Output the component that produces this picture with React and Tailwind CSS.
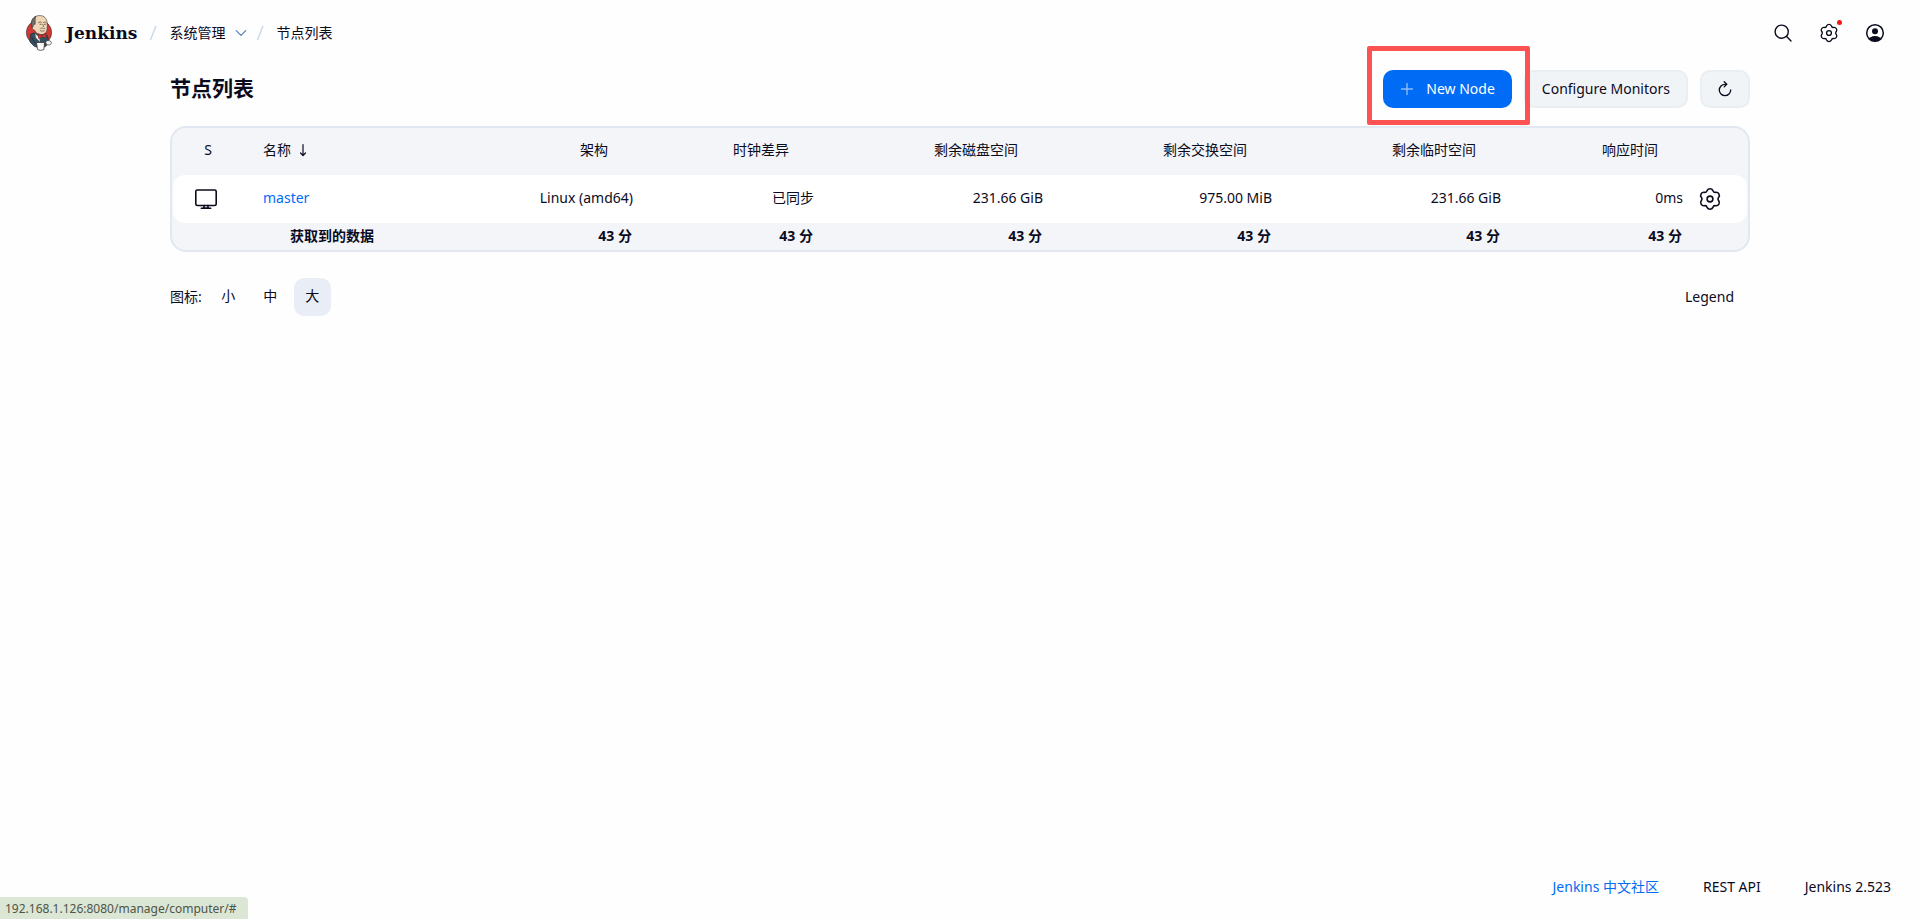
const MONITORS = [
  { name: '架构', value: 'Linux (amd64)' },
  { name: '时钟差异', value: '已同步' },
  { name: '剩余磁盘空间', value: '231.66 GiB' },
  { name: '剩余交换空间', value: '975.00 MiB' },
  { name: '剩余临时空间', value: '231.66 GiB' },
  { name: '响应时间', value: '0ms' }
]

const ICON_SIZES = ['小', '中', '大']

function JenkinsLogo() {
  return (
    <svg viewBox="0 0 26 36" className="w-[26px] h-9" aria-hidden="true">
      <ellipse cx="13" cy="17.500" rx="12.600" ry="12.500" fill="#d33833" stroke="#3b3434" strokeWidth="0.7" />
      <path d="M4.500 19.500c2-1.600 4.500-1.800 6.500-1l4 2 4.500-1.500c2 1 2.600 3 2.600 6l-1.600 5.500c-4 2-8 2.400-12 1L4 27z" fill="#335061" stroke="#1d2b35" strokeWidth="0.7" />
      <path d="M5.800 12C4.600 6 6.800 1.200 12.500.6c6-.5 8.700 3 8.700 8.400 0 3.500.3 6-1.200 8.300-1.300 1.800-3.300 2.400-5.300 2.200-3.300-.3-5-1.500-6-4.300-1.500-.2-2.300-1.200-2.900-3.200z" fill="#f0d6b7" stroke="#3b3434" strokeWidth="0.6" />
      <path d="M6 12.300C4.200 7 6.500 2.400 10 1.400 8.400 4.200 9.700 6.500 9.100 9.400c-1.300-.2-2.400.8-2 2.600z" fill="#6f6c69" stroke="#3b3434" strokeWidth="0.6" />
      <path d="M12.500 7.600c1-.8 2-.7 2.800-.2M17.600 7.400c.9-.5 1.800-.4 2.500.2M14 9.300h1.200M18.200 9.300h1.200M16.800 9.500c.8 1.200 1.300 2 .2 2.600M14.500 15.700c1.300.6 2.600.6 3.800 0" fill="none" stroke="#4a3c33" strokeWidth="0.7" strokeLinecap="round" />
      <path d="M13.200 13.800c1-1.300 2.400-1.400 3.600-.7 1.200-.7 2.300-.4 3 .8-2-.2-4.500-.3-6.600-.1z" fill="#8d8986" />
      <path d="M9 18.500l4.500 4 .5 4.500-4-4z" fill="#f7f5f2" stroke="#6b6b6b" strokeWidth="0.4" />
      <path d="M12.300 18.800l3.500 1.700 4-2.300.4 4.500-3.900-1-3.600 1.900z" fill="#d33833" stroke="#812524" strokeWidth="0.7" />
      <path d="M6 22c.5 3 1.500 5 4 6" fill="none" stroke="#1d2b35" strokeWidth="0.8" />
      <path d="M10.500 27.500h8l-.6 7c-2 1-4.800 1-6.400 0z" fill="#fff" stroke="#3b3434" strokeWidth="0.8" />
      <path d="M18.500 29c2.200.6 2.200 3-.3 3" fill="none" stroke="#3b3434" strokeWidth="0.7" />
      <path d="M20 26.200c1.800-1.200 4.500-.8 5.300 1 .4 1.600-1 3-3 2.700-1.800 0-3-1.500-2.300-3.700z" fill="#f7f5f2" stroke="#3b3434" strokeWidth="0.7" />
    </svg>
  )
}

function SearchIcon() {
  return (
    <svg viewBox="0 0 20 20" className="size-5" fill="none" stroke="currentColor" strokeWidth="1.400" strokeLinecap="round" aria-hidden="true">
      <circle cx="8.700" cy="8.700" r="6.600" />
      <path d="M13.600 13.600l4.400 4.400" />
    </svg>
  )
}

function GearIcon({ className }) {
  return (
    <svg viewBox="0 0 24 24" className={className} fill="none" stroke="currentColor" strokeWidth="1.600" strokeLinecap="round" strokeLinejoin="round" aria-hidden="true">
      <path d="M9.100 3.590A3.200 3.200 0 0 1 14.900 3.590A2.400 2.400 0 0 0 17.840 5.280A3.200 3.200 0 0 1 20.740 10.300A2.400 2.400 0 0 0 20.740 13.700A3.200 3.200 0 0 1 17.840 18.720A2.400 2.400 0 0 0 14.900 20.410A3.200 3.200 0 0 1 9.100 20.410A2.400 2.400 0 0 0 6.160 18.720A3.200 3.200 0 0 1 3.260 13.700A2.400 2.400 0 0 0 3.260 10.300A3.200 3.200 0 0 1 6.160 5.280A2.400 2.400 0 0 0 9.100 3.590z" />
      <circle cx="12" cy="12" r="2.900" />
    </svg>
  )
}

function UserIcon() {
  return (
    <svg viewBox="0 0 20 20" className="size-5" aria-hidden="true">
      <clipPath id="user-clip">
        <circle cx="10" cy="10" r="8.500" />
      </clipPath>
      <circle cx="10" cy="10" r="8.300" fill="none" stroke="currentColor" strokeWidth="1.500" />
      <circle cx="10" cy="8.300" r="3" fill="currentColor" />
      <ellipse cx="10" cy="17" rx="6.200" ry="4" fill="currentColor" clipPath="url(#user-clip)" />
    </svg>
  )
}

function ComputerIcon() {
  return (
    <svg viewBox="0 0 24 24" className="size-6" fill="none" stroke="currentColor" strokeWidth="1.600" strokeLinecap="round" strokeLinejoin="round" aria-hidden="true">
      <rect x="1.800" y="3" width="20.400" height="15.500" rx="1.600" />
      <path d="M10.200 18.500L9.800 21h4.400l-.4-2.500M7.300 21.200h9.400" />
    </svg>
  )
}

function RefreshIcon() {
  return (
    <svg viewBox="0 0 16 16" className="size-4" fill="none" stroke="currentColor" strokeWidth="1.300" strokeLinecap="round" strokeLinejoin="round" aria-hidden="true">
      <path d="M9 3.300H8a5.700 5.700 0 1 0 5.700 5.700" />
      <path d="M7.200.8l2.600 2.500-2.600 2.600" />
    </svg>
  )
}

function Slash() {
  return (
    <svg viewBox="0 0 8 16" className="w-2 h-4 mx-3" fill="none" stroke="#cdd8ea" strokeWidth="1.500" aria-hidden="true">
      <path d="M7 1L1.500 15" />
    </svg>
  )
}

function Header() {
  return (
    <header className="flex items-center justify-between h-[66px] pl-[26px] pr-[35px]">
      <nav className="flex items-center" aria-label="breadcrumb">
        <a href="#" className="flex items-center gap-[14px]">
          <JenkinsLogo />
          <span className="font-['DejaVu_Serif',serif] text-[17px] leading-6 font-bold">Jenkins</span>
        </a>
        <Slash />
        <a href="#">系统管理</a>
        <button type="button" aria-label="展开系统管理" className="ml-2.5 -mr-[3px]">
          <svg viewBox="0 0 12 12" className="size-3" fill="none" stroke="#5b86bd" strokeWidth="1.300" strokeLinecap="round" strokeLinejoin="round" aria-hidden="true">
            <path d="M1.200 3.600L6 8.400l4.800-4.800" />
          </svg>
        </button>
        <Slash />
        <a href="#">节点列表</a>
      </nav>
      <div className="flex items-center gap-[26px]">
        <button type="button" aria-label="搜索"><SearchIcon /></button>
        <button type="button" aria-label="设置" className="relative">
          <GearIcon className="size-5" />
          <span className="absolute -top-[3px] -right-[3px] size-[5px] rounded-full bg-[#f01818]" />
        </button>
        <button type="button" aria-label="用户"><UserIcon /></button>
      </div>
    </header>
  )
}

function NodeTable() {
  return (
    <div className="mt-[18px] px-px rounded-2xl border-2 border-[#e2e8f1] bg-[#f3f5f9] overflow-hidden">
      <table className="w-full table-fixed border-separate border-spacing-0">
        <colgroup>
          <col className="w-[78px]" />
          <col className="w-[162px]" />
          <col className="w-[231px]" />
          <col className="w-[181px]" />
          <col className="w-[229px]" />
          <col className="w-[229px]" />
          <col className="w-[229px]" />
          <col className="w-[182px]" />
          <col className="w-[53px]" />
        </colgroup>
        <thead>
          <tr className="h-[47px]">
            <th scope="col" className="pr-2 pb-1 font-normal">S</th>
            <th scope="col" className="pl-3 pb-1 text-left font-normal">
              <span className="inline-flex items-center gap-2">
                名称
                <svg viewBox="0 0 8 14" className="w-2 h-[14px]" fill="none" stroke="currentColor" strokeWidth="1.200" strokeLinecap="round" strokeLinejoin="round" aria-hidden="true">
                  <path d="M4 1.500v11M1.500 10L4 12.500 6.500 10" />
                </svg>
              </span>
            </th>
            {MONITORS.map((m) => (
              <th key={m.name} scope="col" className="pr-9 pb-1 text-right font-normal">{m.name}</th>
            ))}
            <td />
          </tr>
        </thead>
        <tbody>
          <tr className="h-12">
            <td className="bg-white rounded-l-xl pl-[21px]"><ComputerIcon /></td>
            <td className="bg-white pl-3 pb-0.5">
              <a href="#" className="text-[#006bf5]">master</a>
            </td>
            {MONITORS.map((m) => (
              <td key={m.name} className="bg-white pr-[11px] pb-0.5 text-right">{m.value}</td>
            ))}
            <td className="bg-white rounded-r-xl pl-1">
              <button type="button" aria-label="配置 master" className="block">
                <GearIcon className="size-6" />
              </button>
            </td>
          </tr>
        </tbody>
        <tfoot>
          <tr className="h-[27px]">
            <td />
            <th scope="row" className="pb-0.5 font-bold">获取到的数据</th>
            {MONITORS.map((m) => (
              <td key={m.name} className="pr-3 pb-0.5 text-right font-bold">43 分</td>
            ))}
            <td />
          </tr>
        </tfoot>
      </table>
    </div>
  )
}

export default function App() {
  return (
    <div className="flex flex-col min-h-screen bg-[#fefefe] text-[#0b0b1e] text-sm font-['Noto_Sans','Noto_Sans_CJK_SC',sans-serif]">
      <Header />

      <main className="grow w-full max-w-[1580px] mx-auto pt-1">
        <div className="flex items-center justify-between">
          <h1 className="pb-0.5 text-[21px] leading-7 font-bold">节点列表</h1>
          <div className="flex items-center gap-3">
            <div className="relative z-10">
              <button type="button" className="flex items-center gap-3 h-[38px] px-[17px] rounded-[10px] bg-[#006bf5] text-white">
                <svg viewBox="0 0 14 14" className="size-[14px]" fill="none" stroke="#8cbcfb" strokeWidth="1.400" strokeLinecap="round" aria-hidden="true">
                  <path d="M7 1.500v11M1.500 7h11" />
                </svg>
                New Node
              </button>
              <div className="absolute -left-4 -right-[18px] -top-6 -bottom-[17px] rounded-xs border-[5px] border-[#fc5252] pointer-events-none" />
            </div>
            <button type="button" className="h-[38px] px-4 rounded-[10px] border-2 border-[#e9eef2] bg-[#f1f4f7]">
              Configure Monitors
            </button>
            <button type="button" aria-label="刷新" className="flex items-center justify-center w-[50px] h-[38px] rounded-[10px] border-2 border-[#e9eef2] bg-[#f1f4f7]">
              <RefreshIcon />
            </button>
          </div>
        </div>

        <NodeTable />

        <div className="flex items-center justify-between mt-[26px]">
          <div className="flex items-center gap-[5px]">
            <span className="mr-[3px]">图标:</span>
            {ICON_SIZES.map((size) => (
              <button
                key={size}
                type="button"
                className={`w-[37px] h-[38px] pb-0.5 rounded-[10px] ${size === '大' ? 'bg-[#e9edf5]' : ''}`}
              >
                {size}
              </button>
            ))}
          </div>
          <button type="button" className="h-[38px] px-4">Legend</button>
        </div>
      </main>

      <footer className="flex items-center justify-end gap-11 h-16 pr-[29px]">
        <a href="#" className="text-[#006bf5]">Jenkins 中文社区</a>
        <a href="#">REST API</a>
        <button type="button">Jenkins 2.523</button>
      </footer>

      <div className="fixed left-0 bottom-0 h-[22px] pl-[5px] pr-3 rounded-tr bg-[#dce6d5] text-[#4c5546] text-xs leading-6">
        192.168.1.126:8080/manage/computer/#
      </div>
    </div>
  )
}
